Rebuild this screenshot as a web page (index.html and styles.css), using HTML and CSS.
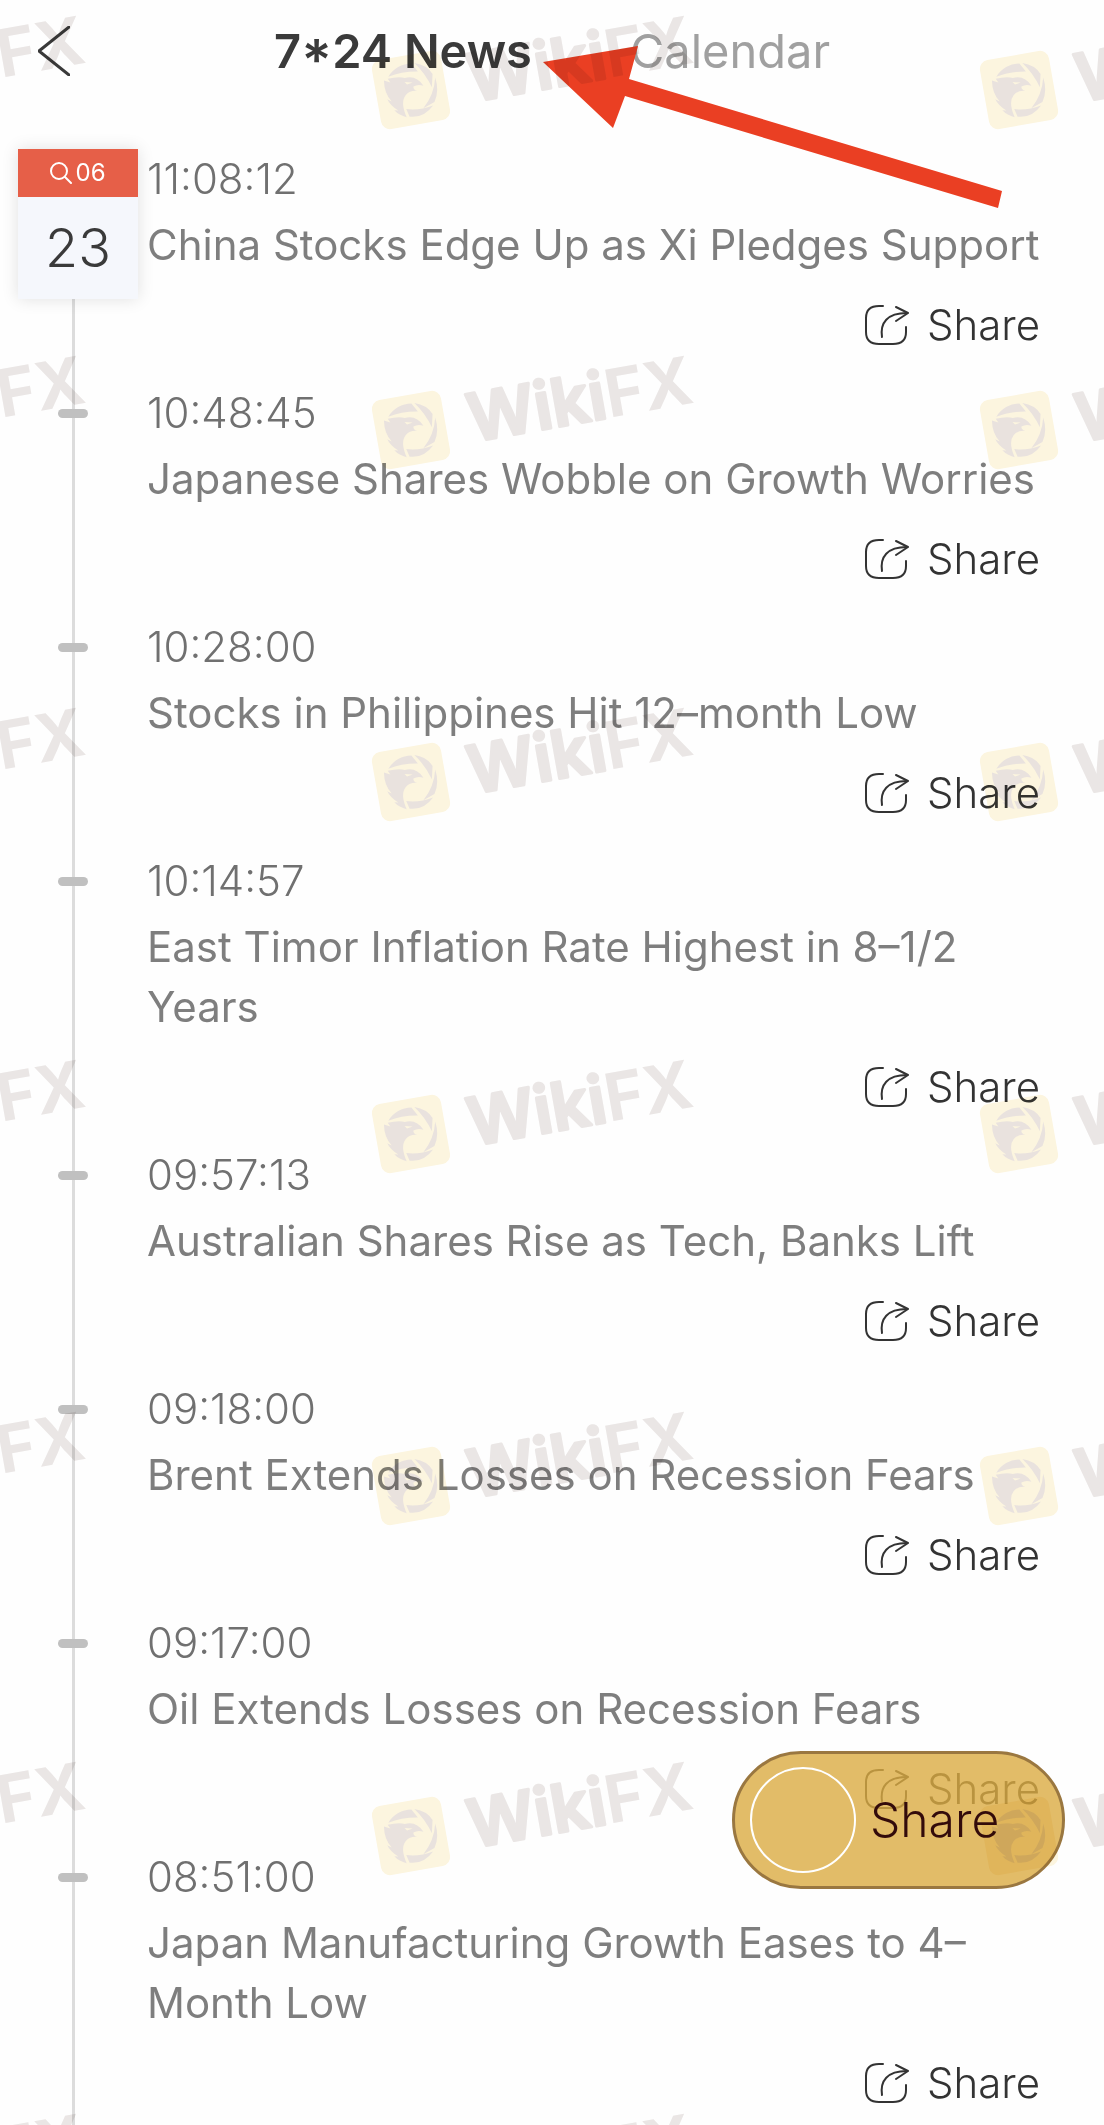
FILE: index.html
```
<!DOCTYPE html>
<html lang="en">

<head>
    <meta charset="UTF-8">
    <meta name="viewport" content="width=device-width, initial-scale=1.0">
    <title>7*24 News</title>
    <link rel="stylesheet" href="styles.css">
</head>

<body>
    <!-- shared icons -->
    <svg class="defs" aria-hidden="true">
        <symbol id="icon-share" viewBox="0 0 45 42">
            <path d="M19 2h-4C6 2 2 6 2 14v14c0 8 4 12 13 12h14c9 0 13-4 13-12v-5" />
            <path d="M18 33C16 19 23 9 43 9" />
            <path d="M32 3l12 6-12 8" />
        </symbol>
        <symbol id="mark" viewBox="0 0 330 140" overflow="visible">
            <g transform="translate(51 90) rotate(-10)">
                <rect class="mark-box" x="-35" y="-35" width="70" height="70" rx="9" />
                <!-- shutter blades -->
                <path class="mark-bird" d="M-20 -17A27 27 0 0 1 5 -26L10 -17Q-6 -20 -20 -17Z" />
                <path class="mark-bird" d="M8 -26Q20 -22 24 -12L21 1Q17 -14 8 -26Z" />
                <path class="mark-bird" d="M26 -8Q28 6 21 16L9 20Q22 9 26 -8Z" />
                <path class="mark-bird" d="M19 19Q8 30 -6 26L-8 18Q5 22 19 19Z" />
                <!-- eagle head -->
                <path class="mark-bird" d="M-9 26Q-16 23 -20 17L-16 18Q-23 12 -25 5L-21 8Q-27 -1 -25 -14L-19 -11L-21 -15Q-10 -16 -4 -13Q8 -14 13 -2Q8 -5 3 -3Q2 0 6 2Q-1 0 -6 4Q-13 10 -9 26Z" />
                <path class="mark-eye" d="M-5 -9l8 2-6 1z" />
            </g>
            <g transform="translate(112 102) rotate(-10)">
                <text class="mark-text"><tspan class="mark-round">Wiki</tspan><tspan>FX</tspan></text>
            </g>
        </symbol>
    </svg>

    <header class="header">
        <button class="back-btn" aria-label="Back">
            <svg viewBox="0 0 32 50"><path d="M31 1L1 25l30 24" /></svg>
        </button>
        <nav class="tabs">
            <a class="tab active" href="#news">7*24 News</a>
            <a class="tab" href="#calendar">Calendar</a>
        </nav>
    </header>

    <main class="timeline" id="news">
        <div class="rail">
            <div class="date">
                <div class="month">
                    <svg viewBox="0 0 22 22"><circle cx="9" cy="9" r="8" /><path d="M15 15l6 6" /></svg>
                    <span>06</span>
                </div>
                <div class="day">23</div>
            </div>
        </div>
        <div class="news-list">
            <article class="news">
                <time class="time">11:08:12</time>
                <h2 class="title">China Stocks Edge Up as Xi Pledges Support</h2>
                <button class="share-btn"><svg><use href="#icon-share" /></svg>Share</button>
            </article>
            <article class="news">
                <time class="time">10:48:45</time>
                <h2 class="title">Japanese Shares Wobble on Growth Worries</h2>
                <button class="share-btn"><svg><use href="#icon-share" /></svg>Share</button>
            </article>
            <article class="news">
                <time class="time">10:28:00</time>
                <h2 class="title">Stocks in Philippines Hit 12–month Low</h2>
                <button class="share-btn"><svg><use href="#icon-share" /></svg>Share</button>
            </article>
            <article class="news">
                <time class="time">10:14:57</time>
                <h2 class="title">East Timor Inflation Rate Highest in 8–1/2 Years</h2>
                <button class="share-btn"><svg><use href="#icon-share" /></svg>Share</button>
            </article>
            <article class="news">
                <time class="time">09:57:13</time>
                <h2 class="title">Australian Shares Rise as Tech, Banks Lift</h2>
                <button class="share-btn"><svg><use href="#icon-share" /></svg>Share</button>
            </article>
            <article class="news">
                <time class="time">09:18:00</time>
                <h2 class="title">Brent Extends Losses on Recession Fears</h2>
                <button class="share-btn"><svg><use href="#icon-share" /></svg>Share</button>
            </article>
            <article class="news">
                <time class="time">09:17:00</time>
                <h2 class="title">Oil Extends Losses on Recession Fears</h2>
                <button class="share-btn"><svg><use href="#icon-share" /></svg>Share</button>
            </article>
            <article class="news">
                <time class="time">08:51:00</time>
                <h2 class="title">Japan Manufacturing Growth Eases to 4–Month Low</h2>
                <button class="share-btn"><svg><use href="#icon-share" /></svg>Share</button>
            </article>
        </div>
    </main>

    <button class="float-share"><span class="ring"></span>Share</button>

    <svg class="arrow" viewBox="0 0 460 164" aria-hidden="true">
        <path d="M0 17L95 1l-9 33 373 112-4 17L82 51l-12 32z" />
    </svg>

    <svg class="watermark" aria-hidden="true">
        <g id="mark-row">
            <use href="#mark" x="-248" width="330" height="140" />
            <use href="#mark" x="360" width="330" height="140" />
            <use href="#mark" x="968" width="330" height="140" />
        </g>
        <use href="#mark-row" y="340" />
        <use href="#mark-row" y="692" />
        <use href="#mark-row" y="1044" />
        <use href="#mark-row" y="1396" />
        <use href="#mark-row" y="1746" />
        <use href="#mark-row" y="2098" />
    </svg>
</body>

</html>
```
FILE: styles.css
```
* {
    box-sizing: border-box;
}

body {
    margin: 0;
    position: relative;
    overflow-x: hidden;
    background-color: #fefefe;
    font-family: Inter, "Liberation Sans", sans-serif;
    font-size: 42px;
    font-weight: 300;
    line-height: 60px;
    color: #3a3a3a;
}

button {
    padding: 0;
    border: none;
    background: none;
    font: inherit;
    color: inherit;
    cursor: pointer;
}

svg {
    fill: none;
    stroke: currentColor;
    stroke-width: 2;
    stroke-linecap: round;
    stroke-linejoin: round;
}

.defs {
    position: absolute;
    width: 0;
    height: 0;
}

/* header */
.header {
    display: grid;
    grid-template-columns: 1fr auto 1fr;
    align-items: center;
    height: 102px;
    padding: 0 38px;
}

.back-btn {
    justify-self: start;
    display: flex;
}

.back-btn svg {
    width: 32px;
    height: 50px;
    stroke-width: 3;
}

.tabs {
    display: flex;
    gap: 98px;
}

.tab {
    font-size: 47px;
    font-weight: 400;
    color: #a0a0a0;
    text-decoration: none;
}

.tab.active {
    font-weight: 600;
    color: #3a3a3a;
}

/* timeline */
.timeline {
    display: flex;
    padding-top: 47px;
}

.rail {
    width: 147px;
    flex-shrink: 0;
    padding-left: 18px;
    background: linear-gradient(#dcdcdc, #dcdcdc) 72px 0 / 3px 100% no-repeat;
}

.date {
    width: 120px;
    background-color: #f5f7fc;
    box-shadow: 0 0 16px rgba(0, 0, 0, 0.12);
    text-align: center;
}

.month {
    display: flex;
    justify-content: center;
    align-items: center;
    gap: 3px;
    height: 48px;
    background-color: #e65f48;
    color: #fff;
    font-size: 24px;
    font-weight: 400;
    line-height: 48px;
}

.month svg {
    width: 22px;
    height: 22px;
}

.day {
    height: 102px;
    font-size: 54px;
    line-height: 102px;
}

.news-list {
    flex: 1;
    padding-right: 64px;
}

.news {
    position: relative;
    display: flex;
    flex-direction: column;
    padding-bottom: 28px;
    color: #707070;
}

/* tick on the rail */
.news + .news::before {
    content: "";
    position: absolute;
    left: -89px;
    top: 26px;
    width: 30px;
    height: 9px;
    border-radius: 5px;
    background-color: #c0c0c0;
}

.title {
    margin: 6px 0 20px;
    font-size: 42px;
    font-weight: 400;
    color: #7e7e7e;
}

.share-btn {
    align-self: flex-end;
    display: flex;
    align-items: center;
    gap: 18px;
    color: #333;
}

.share-btn svg {
    width: 45px;
    height: 42px;
}

/* things over the list */
.float-share {
    position: absolute;
    right: 39px;
    top: 1751px;
    display: flex;
    align-items: center;
    gap: 14px;
    width: 333px;
    height: 138px;
    padding-left: 15px;
    border: 3px solid #9a7740;
    border-radius: 69px;
    background-color: rgba(219, 171, 66, 0.8);
    font-size: 48px;
    color: #330b0b;
}

.ring {
    width: 106px;
    height: 106px;
    border: 2px solid #fff;
    border-radius: 50%;
}

.arrow {
    position: absolute;
    left: 543px;
    top: 45px;
    width: 460px;
    height: 164px;
    fill: #ea3f23;
    stroke: none;
}

.watermark {
    position: absolute;
    left: 0;
    top: 0;
    width: 100%;
    height: 100%;
    stroke: none;
    mix-blend-mode: multiply;
    pointer-events: none;
}

.mark-box,
.mark-eye {
    fill: #fdf6e0;
}

.mark-bird {
    fill: #eae3df;
}

.mark-text {
    fill: #ebe7e6;
    font-size: 66px;
    font-weight: 700;
}

.mark-round {
    font-weight: 600;
    stroke: #ebe7e6;
    stroke-width: 3;
}
```
